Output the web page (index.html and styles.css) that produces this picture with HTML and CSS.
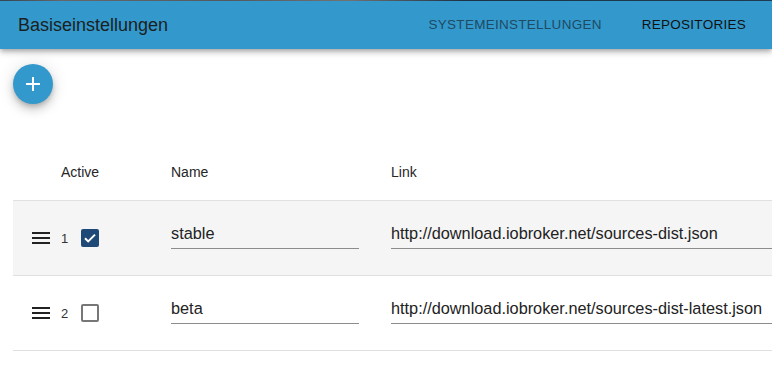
FILE: index.html
```html
<!DOCTYPE html>
<html lang="de">
<head>
<meta charset="utf-8">
<title>Basiseinstellungen</title>
<link rel="stylesheet" href="styles.css">
</head>
<body>
<div class="strip"></div>
<header class="bar">
  <h1 class="bar-title">Basiseinstellungen</h1>
  <nav class="tabs">
    <span class="tab">Systemeinstellungen</span>
    <span class="tab active">Repositories</span>
  </nav>
</header>

<main class="page">
  <button class="fab" type="button" aria-label="Hinzufügen">
    <svg viewBox="0 0 14 14" width="14" height="14"><path d="M6 0h2v6h6v2H8v6H6V8H0V6h6z" fill="#fff"/></svg>
  </button>

  <div class="repo-table">
    <div class="repo-row repo-head">
      <div class="cell cell-active">Active</div>
      <div class="cell">Name</div>
      <div class="cell">Link</div>
    </div>

    <div class="repo-row odd">
      <div class="cell cell-first">
        <svg class="drag" viewBox="0 0 24 24" width="24" height="24"><path d="M3 18h18v-2H3v2zm0-5h18v-2H3v2zm0-7v2h18V6H3z" fill="#222"/></svg>
        <span class="idx">1</span>
        <span class="box checked">
          <svg viewBox="0 0 18 18" width="18" height="18"><path d="M4 9.2l3.2 3.2L14 5.6" fill="none" stroke="#fff" stroke-width="2"/></svg>
        </span>
      </div>
      <div class="cell"><div class="field">stable</div></div>
      <div class="cell cell-last"><div class="field">http://download.iobroker.net/sources-dist.json</div></div>
    </div>

    <div class="repo-row">
      <div class="cell cell-first">
        <svg class="drag" viewBox="0 0 24 24" width="24" height="24"><path d="M3 18h18v-2H3v2zm0-5h18v-2H3v2zm0-7v2h18V6H3z" fill="#222"/></svg>
        <span class="idx">2</span>
        <span class="box"></span>
      </div>
      <div class="cell"><div class="field">beta</div></div>
      <div class="cell cell-last"><div class="field">http://download.iobroker.net/sources-dist-latest.json</div></div>
    </div>
  </div>
</main>
</body>
</html>
```

FILE: styles.css
```css
:root{
  --blue:#3399cc;
  --ink:#262626;
  --line:#e0e0e0;
  --check:#1e4876;
}
*{box-sizing:border-box;}
html,body{margin:0;padding:0;}
body{
  font-family:"Liberation Sans",Arial,sans-serif;
  color:var(--ink);
  background:#fff;
  width:772px;
  height:372px;
  overflow:hidden;
}

.strip{ height:1px; background:linear-gradient(90deg,#3a4b5a 0,#6d6f70 8%,#5a6066 30%,#7a7a7a 45%,#20384c 60%,#234055 100%); }

.bar{
  height:48px; background:var(--blue);
  display:flex; align-items:center; justify-content:space-between;
  padding:0 6px 0 18px;
  box-shadow:0 2px 4px -1px rgba(0,0,0,.2),0 4px 5px 0 rgba(0,0,0,.14),0 1px 10px 0 rgba(0,0,0,.12);
  position:relative; z-index:1;
}
.bar-title{ margin:0; font-size:18px; font-weight:400; color:#1c1f22; }
.tabs{ display:flex; height:100%; }
.tab{ display:flex; align-items:center; padding:0 20px 1px; font-size:13.5px; text-transform:uppercase; letter-spacing:.02em; color:#1f4a63; }
.tab.active{ color:#111; }

.page{ padding:15px 0 0 13px; }

.fab{
  width:40px; height:40px; border-radius:50%; border:0; padding:0;
  background:var(--blue); display:flex; align-items:center; justify-content:center;
  box-shadow:0 3px 5px -1px rgba(0,0,0,.2),0 6px 10px 0 rgba(0,0,0,.14),0 1px 18px 0 rgba(0,0,0,.12);
  cursor:pointer;
}

.repo-table{ margin-top:40px; }
.repo-row{
  display:grid; grid-template-columns:142px 220px 1fr;
  height:75px; border-bottom:1px solid var(--line);
}
.repo-row.odd{ background:#f5f5f5; }
.repo-head{ height:57px; font-size:14px; }
.cell{ display:flex; align-items:center; padding:0 16px; min-width:0; }
.cell-last{ padding-right:0; }
.repo-head .cell-active{ padding-left:48px; }

.cell-first{ padding-right:0; }
.drag{ flex-shrink:0; }
.idx{ width:20px; margin-left:8px; font-size:13px; color:#333; }
.box{
  width:18px; height:18px; border:2px solid #777; border-radius:2px;
  display:flex; align-items:center; justify-content:center;
}
.box.checked{ background:var(--check); border:0; }

.field{
  width:100%; font-size:16.3px; line-height:19px; color:#222;
  padding:4px 0 5px; margin-bottom:8px;
  border-bottom:1px solid #8c8c8c;
  white-space:nowrap; overflow:hidden;
}
```
